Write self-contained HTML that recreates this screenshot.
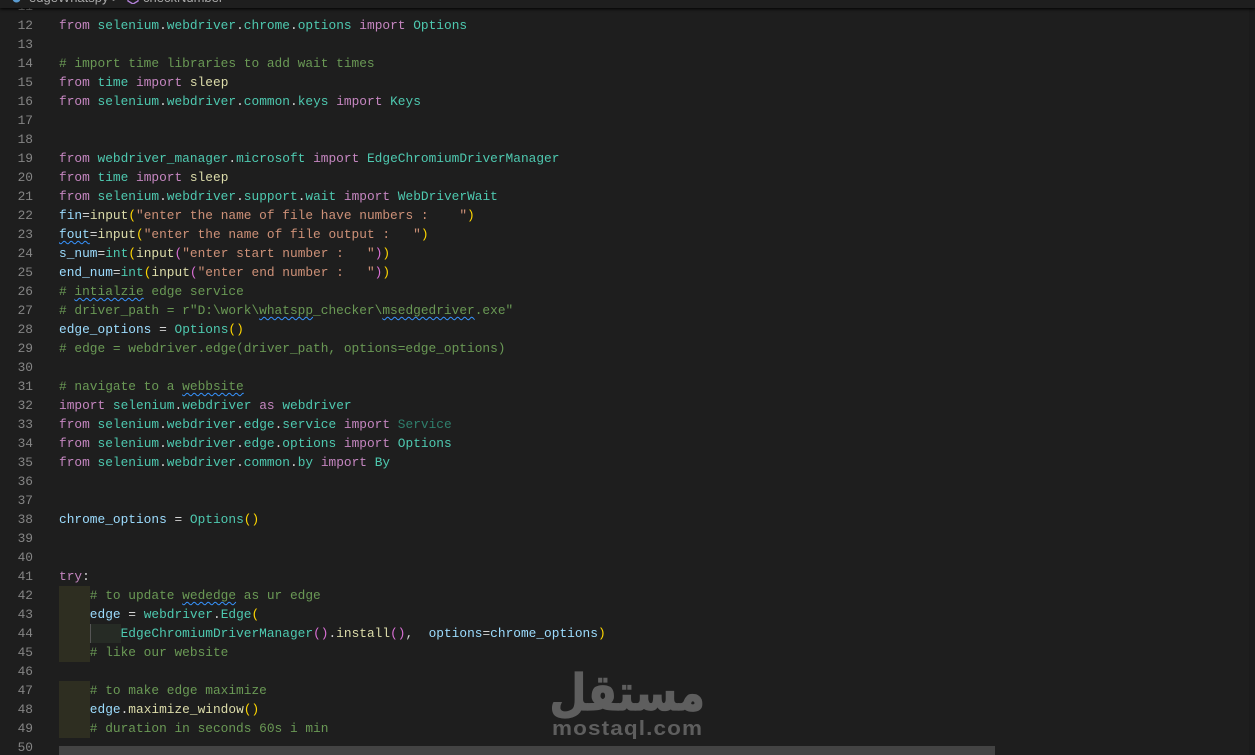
<!DOCTYPE html>
<html><head><meta charset="utf-8"><style>
html,body{margin:0;padding:0;width:1255px;height:755px;overflow:hidden;background:#1e1e1e}
#ed{position:absolute;left:0;top:0;width:1255px;height:755px;overflow:hidden;font:12.83px/19px "Liberation Mono",monospace;color:#d4d4d4}
.l{position:absolute;left:59px;white-space:pre;height:19px}
.n{position:absolute;left:0;width:33px;text-align:right;color:#858585}
.k{color:#c586c0}.m{color:#4ec9b0}.c{color:#6a9955}.v{color:#9cdcfe}.f{color:#dcdcaa}.s{color:#ce9178}
.y{color:#ffd700}.p{color:#da70d6}.b{color:#179fff}.d{color:#2f7f6c}
.w{text-decoration:underline wavy #3794ff 1px;text-underline-offset:2px;text-decoration-skip-ink:none}
.hl{position:absolute;background:#2e2e21}
#top{position:absolute;left:0;top:0;width:1255px;height:8px;background:#1e1e1e;box-shadow:0 1px 3px #000;overflow:hidden;font:13px/13px "Liberation Sans",sans-serif;color:#a9a9a9;white-space:pre}
</style></head><body><div id="ed">
<div class="hl" style="left:59px;top:586px;width:31px;height:76px"></div>
<div class="hl" style="left:59px;top:681px;width:31px;height:57px"></div>
<div style="position:absolute;left:90px;top:624px;width:30px;height:19px;background:#262b25;border-left:1px solid #555"></div>

<div class="n" style="top:-3px">11</div>
<div class="n" style="top:16px">12</div><div class="l" style="top:16px"><span class="k">from</span> <span class="m">selenium</span>.<span class="m">webdriver</span>.<span class="m">chrome</span>.<span class="m">options</span> <span class="k">import</span> <span class="m">Options</span></div>
<div class="n" style="top:35px">13</div>
<div class="n" style="top:54px">14</div><div class="l c" style="top:54px"># import time libraries to add wait times</div>
<div class="n" style="top:73px">15</div><div class="l" style="top:73px"><span class="k">from</span> <span class="m">time</span> <span class="k">import</span> <span class="f">sleep</span></div>
<div class="n" style="top:92px">16</div><div class="l" style="top:92px"><span class="k">from</span> <span class="m">selenium</span>.<span class="m">webdriver</span>.<span class="m">common</span>.<span class="m">keys</span> <span class="k">import</span> <span class="m">Keys</span></div>
<div class="n" style="top:111px">17</div>
<div class="n" style="top:130px">18</div>
<div class="n" style="top:149px">19</div><div class="l" style="top:149px"><span class="k">from</span> <span class="m">webdriver_manager</span>.<span class="m">microsoft</span> <span class="k">import</span> <span class="m">EdgeChromiumDriverManager</span></div>
<div class="n" style="top:168px">20</div><div class="l" style="top:168px"><span class="k">from</span> <span class="m">time</span> <span class="k">import</span> <span class="f">sleep</span></div>
<div class="n" style="top:187px">21</div><div class="l" style="top:187px"><span class="k">from</span> <span class="m">selenium</span>.<span class="m">webdriver</span>.<span class="m">support</span>.<span class="m">wait</span> <span class="k">import</span> <span class="m">WebDriverWait</span></div>
<div class="n" style="top:206px">22</div><div class="l" style="top:206px"><span class="v">fin</span>=<span class="f">input</span><span class="y">(</span><span class="s">"enter the name of file have numbers :    "</span><span class="y">)</span></div>
<div class="n" style="top:225px">23</div><div class="l" style="top:225px"><span class="v w">fout</span>=<span class="f">input</span><span class="y">(</span><span class="s">"enter the name of file output :   "</span><span class="y">)</span></div>
<div class="n" style="top:244px">24</div><div class="l" style="top:244px"><span class="v">s_num</span>=<span class="m">int</span><span class="y">(</span><span class="f">input</span><span class="p">(</span><span class="s">"enter start number :   "</span><span class="p">)</span><span class="y">)</span></div>
<div class="n" style="top:263px">25</div><div class="l" style="top:263px"><span class="v">end_num</span>=<span class="m">int</span><span class="y">(</span><span class="f">input</span><span class="p">(</span><span class="s">"enter end number :   "</span><span class="p">)</span><span class="y">)</span></div>
<div class="n" style="top:282px">26</div><div class="l c" style="top:282px"># <span class="w">intialzie</span> edge service</div>
<div class="n" style="top:301px">27</div><div class="l c" style="top:301px"># driver_path = r"D:\work\<span class="w">whatspp</span>_checker\<span class="w">msedgedriver</span>.exe"</div>
<div class="n" style="top:320px">28</div><div class="l" style="top:320px"><span class="v">edge_options</span> = <span class="m">Options</span><span class="y">()</span></div>
<div class="n" style="top:339px">29</div><div class="l c" style="top:339px"># edge = webdriver.edge(driver_path, options=edge_options)</div>
<div class="n" style="top:358px">30</div>
<div class="n" style="top:377px">31</div><div class="l c" style="top:377px"># navigate to a <span class="w">webbsite</span></div>
<div class="n" style="top:396px">32</div><div class="l" style="top:396px"><span class="k">import</span> <span class="m">selenium</span>.<span class="m">webdriver</span> <span class="k">as</span> <span class="m">webdriver</span></div>
<div class="n" style="top:415px">33</div><div class="l" style="top:415px"><span class="k">from</span> <span class="m">selenium</span>.<span class="m">webdriver</span>.<span class="m">edge</span>.<span class="m">service</span> <span class="k">import</span> <span class="d">Service</span></div>
<div class="n" style="top:434px">34</div><div class="l" style="top:434px"><span class="k">from</span> <span class="m">selenium</span>.<span class="m">webdriver</span>.<span class="m">edge</span>.<span class="m">options</span> <span class="k">import</span> <span class="m">Options</span></div>
<div class="n" style="top:453px">35</div><div class="l" style="top:453px"><span class="k">from</span> <span class="m">selenium</span>.<span class="m">webdriver</span>.<span class="m">common</span>.<span class="m">by</span> <span class="k">import</span> <span class="m">By</span></div>
<div class="n" style="top:472px">36</div>
<div class="n" style="top:491px">37</div>
<div class="n" style="top:510px">38</div><div class="l" style="top:510px"><span class="v">chrome_options</span> = <span class="m">Options</span><span class="y">()</span></div>
<div class="n" style="top:529px">39</div>
<div class="n" style="top:548px">40</div>
<div class="n" style="top:567px">41</div><div class="l" style="top:567px"><span class="k">try</span>:</div>
<div class="n" style="top:586px">42</div><div class="l c" style="top:586px">    # to update <span class="w">wededge</span> as ur edge</div>
<div class="n" style="top:605px">43</div><div class="l" style="top:605px">    <span class="v">edge</span> = <span class="m">webdriver</span>.<span class="m">Edge</span><span class="y">(</span></div>
<div class="n" style="top:624px">44</div><div class="l" style="top:624px">        <span class="m">EdgeChromiumDriverManager</span><span class="p">()</span>.<span class="f">install</span><span class="p">()</span>,  <span class="v">options</span>=<span class="v">chrome_options</span><span class="y">)</span></div>
<div class="n" style="top:643px">45</div><div class="l c" style="top:643px">    # like our website</div>
<div class="n" style="top:662px">46</div>
<div class="n" style="top:681px">47</div><div class="l c" style="top:681px">    # to make edge maximize</div>
<div class="n" style="top:700px">48</div><div class="l" style="top:700px">    <span class="v">edge</span>.<span class="f">maximize_window</span><span class="y">()</span></div>
<div class="n" style="top:719px">49</div><div class="l c" style="top:719px">    # duration in seconds 60s i min</div>
<div class="n" style="top:738px">50</div>

<div style="position:absolute;left:59px;top:746px;width:936px;height:9px;background:#434343"></div>
<div style="position:absolute;left:1249px;top:0;width:6px;height:755px;background:#1b1b1b"></div>

<div style="position:absolute;left:455px;top:663px;width:250px;height:60px;color:#5e5e5e;font:bold 50px/60px 'DejaVu Sans',sans-serif;text-align:right;white-space:nowrap;transform:scaleX(.85);transform-origin:100% 50%;-webkit-text-stroke:1.2px #5e5e5e" dir="ltr"><span dir="rtl" lang="ar">مستقل</span></div>
<div style="position:absolute;left:552px;top:717px;color:#5e5e5e;font:bold 20px/24px 'Liberation Sans',sans-serif;white-space:nowrap;letter-spacing:1px;transform:scaleX(1.125);transform-origin:0 50%">mostaql.com</div>

<div id="top"><svg style="position:absolute;left:12px;top:-6px" width="9" height="9"><circle cx="4.5" cy="4.5" r="4" fill="#5a9bd0"/></svg><span style="position:absolute;left:29px;top:-9px">edgeWhatspy &gt;</span><svg style="position:absolute;left:127px;top:-8px" width="12" height="12"><path d="M6 1l5 3v5l-5 3-5-3V4z" fill="none" stroke="#b180d7" stroke-width="1.4"/></svg><span style="position:absolute;left:143px;top:-9px">checkNumber</span></div>
</div></body></html>
